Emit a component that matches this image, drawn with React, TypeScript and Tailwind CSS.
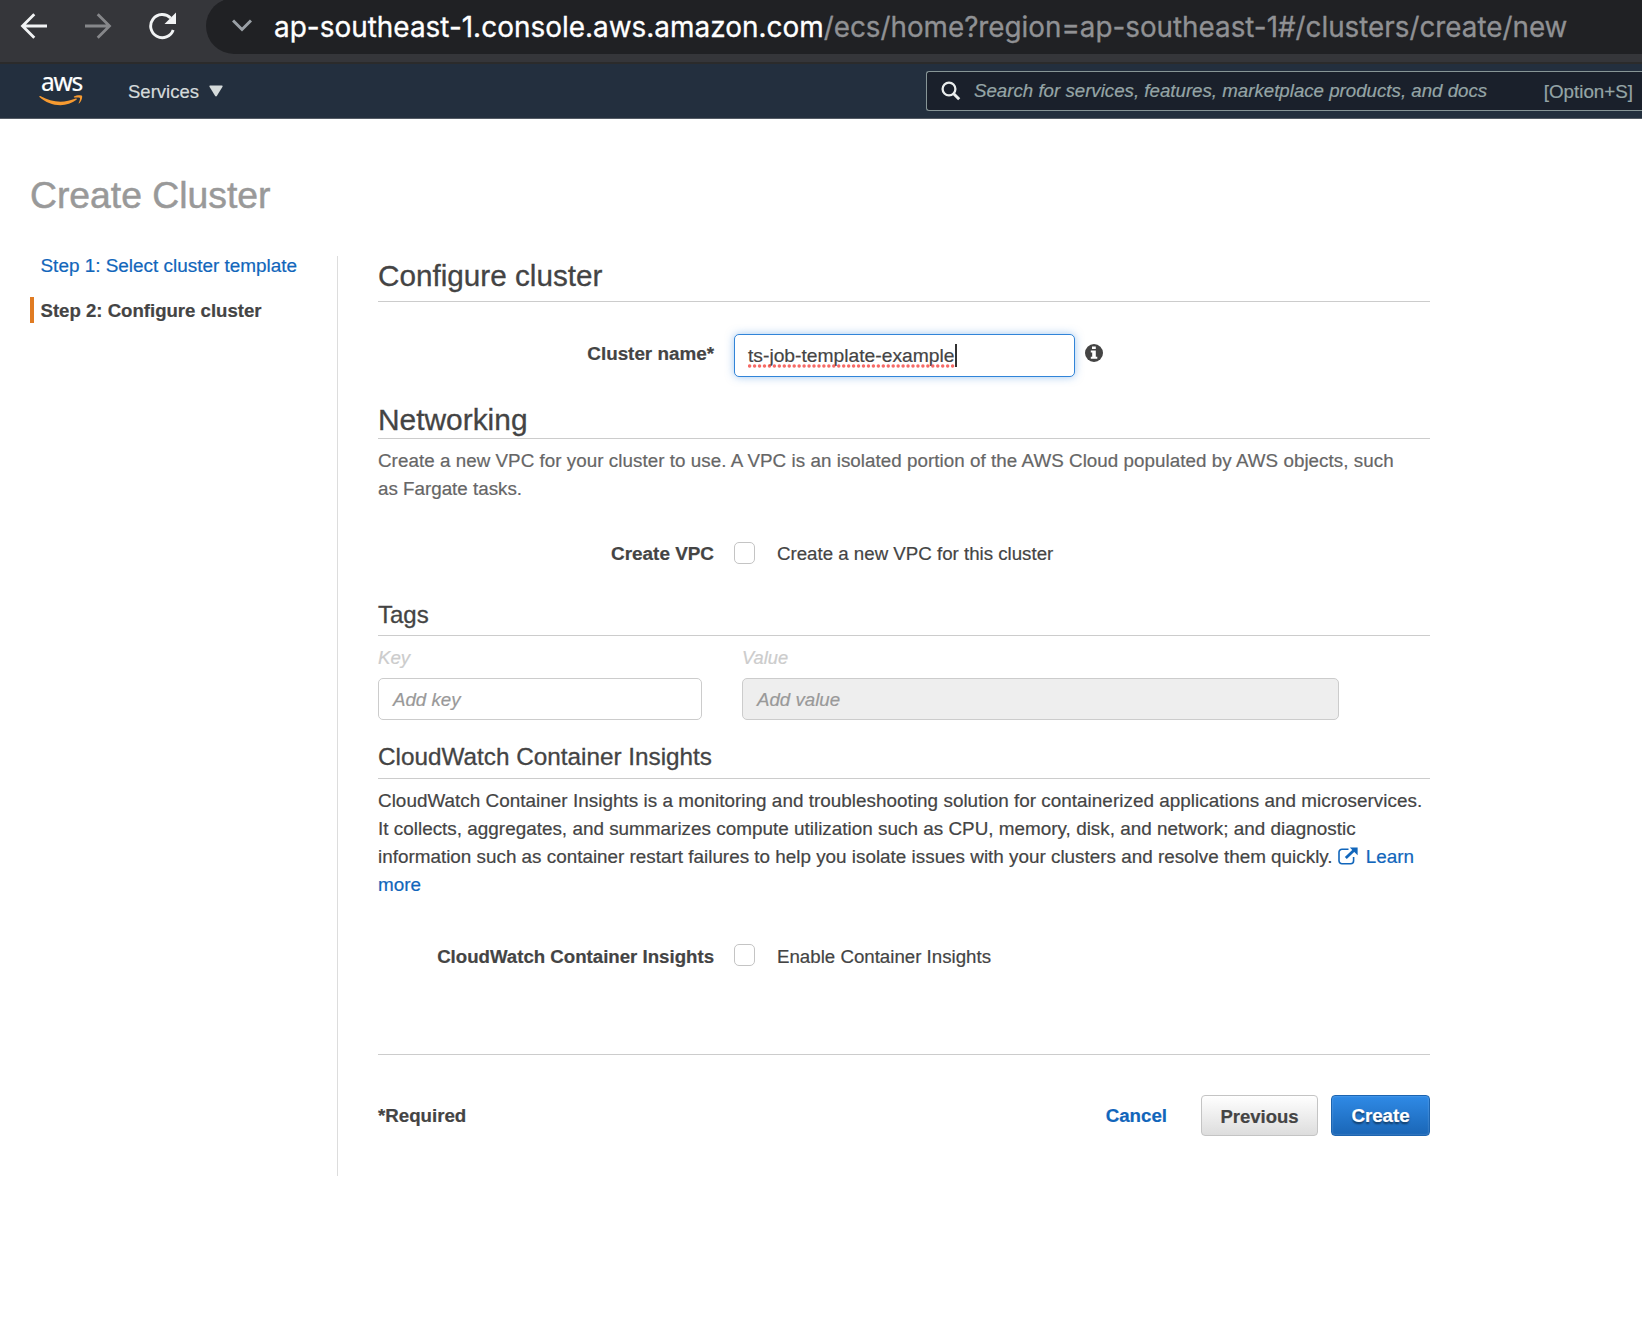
import type { ReactNode } from 'react';

function Toolbar() {
  return (
    <div className="flex h-[62px] items-start overflow-hidden bg-[#35363a]">
      <div className="flex h-[51px] w-[206px] shrink-0 items-center pl-[20px]">
        <svg width="28" height="26" viewBox="0 0 28 26" fill="none" stroke="#f1f3f4" strokeWidth="2.8">
          <path d="M27 13H3M14.3 1.2L2.5 13l11.8 11.8" />
        </svg>
        <svg className="ml-[36px]" width="28" height="26" viewBox="0 0 28 26" fill="none" stroke="#86878a" strokeWidth="2.8">
          <path d="M1 13h24M13.7 1.2L25.5 13 13.7 24.8" />
        </svg>
        <svg className="ml-[36px]" width="30" height="28" viewBox="0 0 30 28" fill="none">
          <path d="M22.6 6A11.6 11.6 0 1 0 25.2 18" stroke="#f1f3f4" strokeWidth="2.9" />
          <path d="M28 0.5V12H16.5z" fill="#f1f3f4" />
        </svg>
      </div>
      <div className="-mt-[2px] flex h-[56px] flex-1 items-center rounded-l-full bg-[#202124] pl-[26px]">
        <svg className="shrink-0" width="20" height="14" viewBox="0 0 20 14" fill="none" stroke="#9aa0a6" strokeWidth="3">
          <path d="M1 1.5l9 9 9-9" />
        </svg>
        <div className="ml-[22px] pt-[1px] font-['Inter',sans-serif] text-[27.95px] leading-[40px] whitespace-nowrap text-white [-webkit-text-stroke:0.3px]">
          ap-southeast-1.console.aws.amazon.com
          <span className="text-[27.8px] text-[#909194]">/ecs/home?region=ap-southeast-1#/clusters/create/new</span>
        </div>
      </div>
    </div>
  );
}

function AwsLogo() {
  return (
    <div className="flex w-[44px] flex-col items-center">
      <span className="h-[21px] pl-[1px] font-['Noto_Sans',sans-serif] text-[24.5px] leading-[13px] tracking-[-1.3px] text-white">
        aws
      </span>
      <svg className="-mt-[1px]" width="44" height="12" viewBox="0 0 44 12">
        <path d="M0.4 1.3c0.3-.5.8-.4 1.4 0C8 4.900 14.500 6.700 21.500 6.700c5 0 10.300-1 15.200-3.100.9-.4 1.600.5.8 1.200C33.200 8.300 27 10.200 21.400 10.200 13.600 10.200 6.300 7.100.7 2.200.3 1.900.200 1.600.4 1.300z" fill="#f79a30" />
        <path d="M35 1.400c2.200-1.400 7.400-1.500 8-.6.6 1-.3 5.500-2.700 7.500-.4.3-.8.1-.6-.3.7-1.700 1.700-4.400 1.200-5.100-.5-.7-3.700-.5-5.300-.3-.6.1-1-.6-.6-1.200z" fill="#f79a30" />
      </svg>
    </div>
  );
}

function NavBar() {
  return (
    <div className="flex h-[57px] items-center border-t-2 border-b border-t-[#2b2b2b] border-b-[#545b64] bg-[#232f3e] pl-[39px]">
      <AwsLogo />
      <span className="ml-[45px] pt-[2px] text-[18.5px] leading-[20px] text-[#d5dbdb]">Services</span>
      <svg className="ml-[10px]" width="14" height="12" viewBox="0 0 14 12">
        <path d="M1.2.6h11.600c.7 0 1 .6.700 1.200L7.800 11c-.4.600-1.200.6-1.600 0L.5 1.800C.2 1.200.5.6 1.200.6z" fill="#d5dbdb" />
      </svg>
      <div className="ml-auto flex h-[40px] w-[716px] items-center rounded-l-[3px] border border-r-0 border-[#879596] bg-[#1a202b] pl-[14px]">
        <svg width="20" height="20" viewBox="0 0 20 20" fill="none" stroke="#eaeded">
          <circle cx="8" cy="8" r="6.400" strokeWidth="2.300" />
          <path d="M12.700 12.700L18.200 18.200" strokeWidth="3" />
        </svg>
        <span className="ml-[13px] text-[18.7px] leading-[20px] whitespace-nowrap text-[#95a5a6] italic">
          Search for services, features, marketplace products, and docs
        </span>
        <span className="mr-[9px] ml-auto pt-[2px] text-[18.8px] leading-[20px] text-[#95a5a6]">[Option+S]</span>
      </div>
    </div>
  );
}

function Checkbox() {
  return <span className="h-[22px] w-[21px] shrink-0 rounded-[5px] border border-[#c4c4c4] bg-white" />;
}

function FieldRow({
  label,
  className,
  labelClassName,
  children,
}: {
  label: ReactNode;
  className: string;
  labelClassName: string;
  children: ReactNode;
}) {
  return (
    <div className={`flex items-center ${className}`}>
      <div className={`w-[336px] shrink-0 text-right leading-[22px] font-bold ${labelClassName}`}>{label}</div>
      <div className="ml-[20px] flex items-center">{children}</div>
    </div>
  );
}

export default function App() {
  return (
    <div className="min-h-[1340px] w-[1642px] overflow-hidden bg-white font-['Liberation_Sans',Arial,sans-serif] text-[18.7px] text-[#444] [-webkit-text-stroke:0.2px]">
      <Toolbar />
      <NavBar />
      <h1 className="mt-[56px] ml-[30px] text-[37.3px] leading-[40px] text-[#999] [-webkit-text-stroke:0.5px]">Create Cluster</h1>

      <div className="mt-[41px] flex h-[920px]">
        <nav className="w-[337px] shrink-0 pl-[30px]">
          <div className="pl-[10.5px] text-[18.93px] leading-[19px]">
            <a className="text-[#1166bb]">Step 1: Select cluster template</a>
          </div>
          <div className="mt-[22px] h-[26px] border-l-4 border-[#e07b22] pt-[1px] pl-[6.5px] text-[18.6px] leading-[26px] font-bold">
            Step 2: Configure cluster
          </div>
        </nav>

        <main className="w-[1093px] border-l border-[#ddd] pl-[40px]">
          <h2 className="h-[46px] border-b border-[#ccc] text-[29.7px] leading-[39px] [-webkit-text-stroke:0.3px]">Configure cluster</h2>

          <FieldRow
            label={<span className="text-[18.85px]">Cluster name*</span>}
            className="mt-[30px] h-[45px]"
            labelClassName="pb-[2px]"
          >
            <div className="mt-[2px] flex h-[43px] w-[341px] items-center rounded-[5px] border border-[#3184d8] bg-white pl-[13px] shadow-[0_0_9px_rgba(70,145,225,0.5)]">
              <span className="relative text-[19.25px] leading-[22px]">
                ts-job-template-example
                <svg className="absolute bottom-[-1px] left-0" width="207" height="4">
                  <path d="M1.600 2H206" stroke="#f4504b" strokeOpacity="0.85" strokeWidth="3.400" strokeLinecap="round" strokeDasharray="0.1 4.850" />
                </svg>
              </span>
              <span className="h-[23px] w-[2px] bg-[#333]" />
            </div>
            <svg className="mb-[3px] ml-[10px]" width="18" height="18" viewBox="0 0 18 18">
              <circle cx="9" cy="9" r="9" fill="#444" />
              <path d="M7 2.400h3.800v2.700H7zM5.800 6.500h5v6.300h1.500v1.900H5.800v-1.900h1.400V8.400H5.800z" fill="#fff" />
            </svg>
          </FieldRow>

          <h2 className="mt-[27px] h-[35px] border-b border-[#ccc] text-[29.900px] leading-[32px] [-webkit-text-stroke:0.3px]">Networking</h2>
          <p className="mt-[8px] text-[18.8px] leading-[28px] whitespace-nowrap text-[#666]">
            <span className="tracking-[0.046px]">
              Create a new VPC for your cluster to use. A VPC is an isolated portion of the AWS Cloud populated by AWS objects, such
            </span>
            <br />
            as Fargate tasks.
          </p>
          <FieldRow label={<span className="text-[18.9px]">Create VPC</span>} className="mt-[39px] h-[22px]" labelClassName="pt-[2px]">
            <Checkbox />
            <span className="ml-[22px] pt-[2px] leading-[22px]">Create a new VPC for this cluster</span>
          </FieldRow>

          <h3 className="mt-[37px] h-[35px] border-b border-[#ccc] text-[24px] leading-[28px] [-webkit-text-stroke:0.3px]">Tags</h3>
          <div className="mt-[13px] flex gap-[40px] italic">
            <div className="w-[324px]">
              <div className="leading-[18px] text-[#ccc]">Key</div>
              <div className="mt-[11px] h-[42px] rounded-[5px] border border-[#ccc] pl-[14px] leading-[41px] text-[#999]">Add key</div>
            </div>
            <div className="w-[597px]">
              <div className="text-[18.3px] leading-[18px] text-[#ccc]">Value</div>
              <div className="mt-[11px] h-[42px] rounded-[5px] border border-[#ccc] bg-[#eee] pl-[14px] leading-[41px] text-[#999]">Add value</div>
            </div>
          </div>

          <h3 className="mt-[23px] h-[36px] border-b border-[#ccc] text-[24.300px] leading-[28px] [-webkit-text-stroke:0.3px]">
            CloudWatch Container Insights
          </h3>
          <p className="mt-[8px] text-[18.880px] leading-[28px] whitespace-nowrap">
            <span className="tracking-[0.032px]">
              CloudWatch Container Insights is a monitoring and troubleshooting solution for containerized applications and microservices.
            </span>
            <br />
            <span className="tracking-[0.018px]">
              It collects, aggregates, and summarizes compute utilization such as CPU, memory, disk, and network; and diagnostic
            </span>
            <br />
            information such as container restart failures to help you isolate issues with your clusters and resolve them quickly.{' '}
            <a className="text-[#1166bb]">
              <svg className="mr-[8px] inline-block align-[-2px]" width="20" height="18" viewBox="0 0 20 18" fill="none">
                <path d="M10.500 2.200H4A3 3 0 0 0 1 5.200v8.600a3 3 0 0 0 3 3h8.600a3 3 0 0 0 3-3V10" stroke="#1166bb" strokeWidth="1.600" />
                <path d="M7.800 11L16 3.200" stroke="#1166bb" strokeWidth="2.800" />
                <path d="M11.800 0.500H19.600V8.300z" fill="#1166bb" />
              </svg>
              Learn
              <br />
              more
            </a>
          </p>
          <FieldRow
            label={<span className="text-[18.65px]">CloudWatch Container Insights</span>}
            className="mt-[45px] h-[22px]"
            labelClassName="pt-[4px]"
          >
            <Checkbox />
            <span className="ml-[22px] pt-[4px] leading-[22px]">Enable Container Insights</span>
          </FieldRow>

          <div className="mt-[88px] flex items-center border-t border-[#ccc] pt-[40px] font-bold">
            <span className="pt-[2px]">*Required</span>
            <a className="ml-auto pt-[2px] text-[#1166bb]">Cancel</a>
            <button className="ml-[34px] h-[41px] w-[117px] rounded-[4px] border border-[#c4c4c4] bg-linear-to-b from-white to-[#dddddd] pt-[2px] text-[18.500px]">
              Previous
            </button>
            <button className="ml-[13px] h-[41px] w-[99px] rounded-[4px] border border-[#1c64b0] bg-linear-to-b from-[#2f8ae6] to-[#1a66b6] pt-[2px] text-[18.700px] text-white shadow-[inset_0_0_2px_rgba(255,255,255,0.35)] [text-shadow:0_2px_2px_rgba(0,0,0,0.5)]">
              Create
            </button>
          </div>
        </main>
      </div>
    </div>
  );
}
